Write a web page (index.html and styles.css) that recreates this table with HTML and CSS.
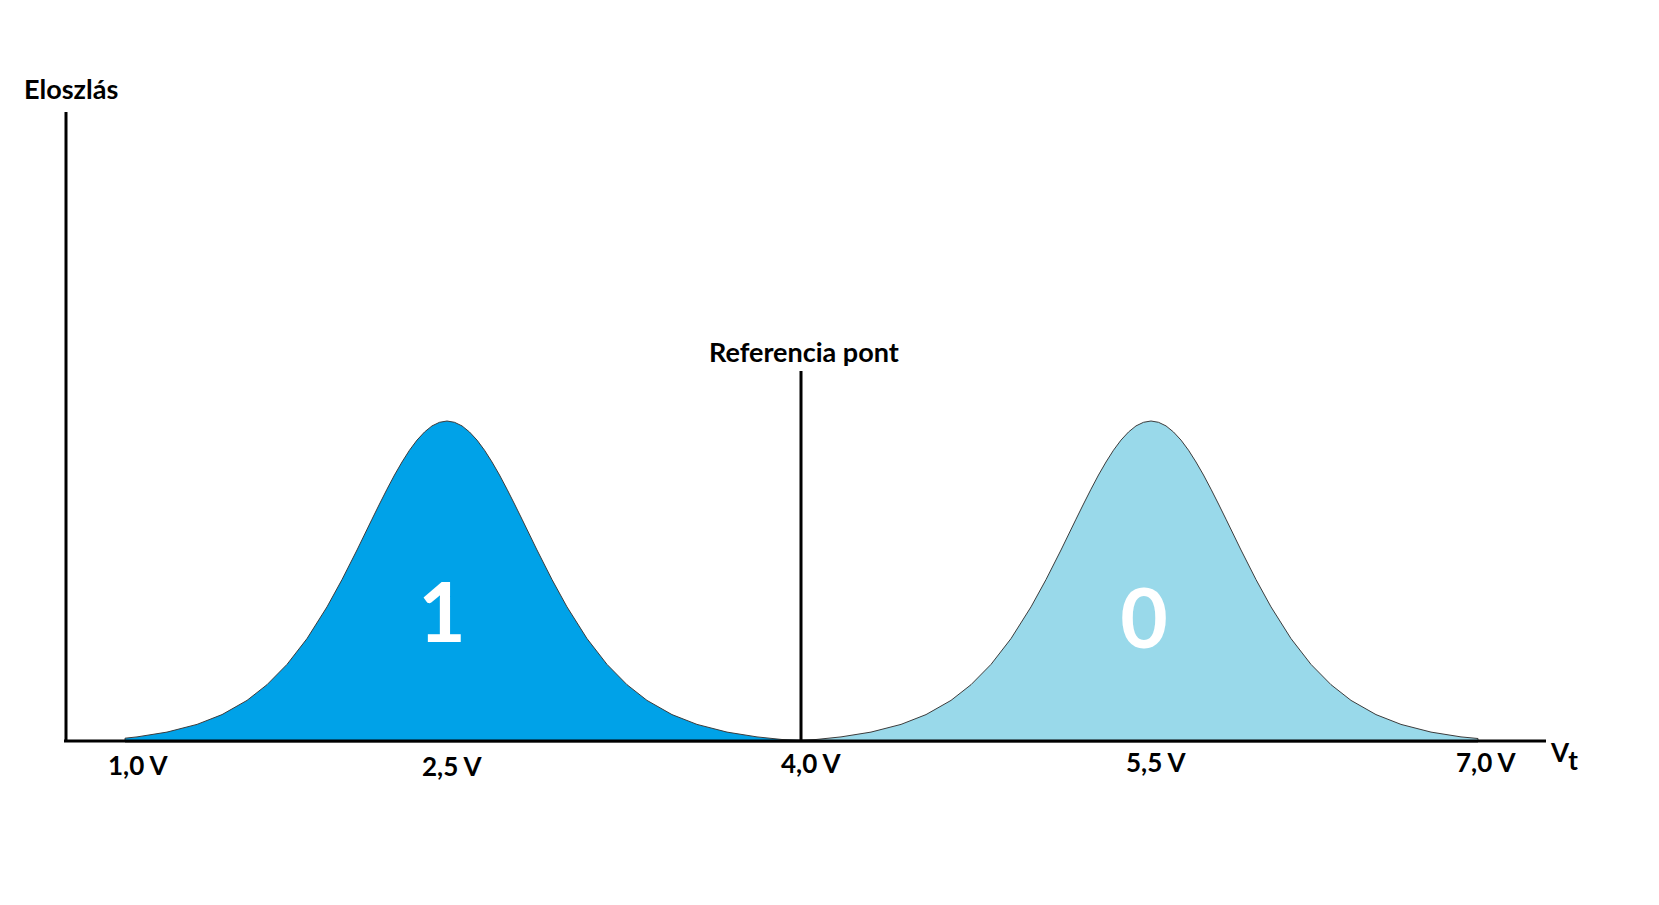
FILE: index.html
```html
<!DOCTYPE html>
<html lang="hu">
<head>
<meta charset="utf-8">
<title>Eloszlás</title>
<link rel="stylesheet" href="styles.css">
</head>
<body>
<div class="canvas">
<svg class="chart" width="1659" height="905" viewBox="0 0 1659 905" xmlns="http://www.w3.org/2000/svg">
  <path class="curve curve-one" d="M125,742 L125,738.2 L137,736.9 L167,732.1 L197,724.4 L222,714.6 L247,700.4 L267,684.7 L287,664.4 L307,638.6 L327,606.9 L342,579.6 L357,550 L372,519.2 L379.5,504 L387,489.2 L394.5,475 L402,462 L409.5,450.2 L417,440.1 L424.5,432 L432,425.9 L439.5,422.3 L447,421 L454.5,422.3 L462,425.9 L469.5,432 L477,440.1 L484.5,450.2 L492,462 L499.5,475 L507,489.2 L514.5,504 L522,519.2 L537,550 L552,579.6 L567,606.9 L587,638.6 L607,664.4 L627,684.7 L647,700.4 L672,714.6 L697,724.4 L727,732.1 L757,736.9 L782,739.5 L800,740 L800,742 Z"/>
  <path class="curve curve-zero" d="M800,742 L800,740 L816,739.5 L841,736.9 L871,732.1 L901,724.4 L926,714.6 L951,700.4 L971,684.7 L991,664.4 L1011,638.6 L1031,606.9 L1046,579.6 L1061,550 L1076,519.2 L1083.5,504 L1091,489.2 L1098.5,475 L1106,462 L1113.5,450.2 L1121,440.1 L1128.5,432 L1136,425.9 L1143.5,422.3 L1151,421 L1158.5,422.3 L1166,425.9 L1173.5,432 L1181,440.1 L1188.5,450.2 L1196,462 L1203.5,475 L1211,489.2 L1218.5,504 L1226,519.2 L1241,550 L1256,579.6 L1271,606.9 L1291,638.6 L1311,664.4 L1331,684.7 L1351,700.4 L1376,714.6 L1401,724.4 L1431,732.1 L1461,736.9 L1478,738.5 L1478,742 Z"/>
  <line class="axis" x1="66" y1="112" x2="66" y2="742"/>
  <line class="axis" x1="64" y1="741" x2="1546" y2="741"/>
  <line class="axis" x1="801" y1="371" x2="801" y2="741"/>
  <text class="label" x="24" y="99">Eloszlás</text>
  <text class="label" x="709" y="362">Referencia pont</text>
  <text class="big" x="442" y="642">1</text>
  <text class="big" x="1144" y="648">0</text>
  <text class="tick" x="108" y="775">1,0 V</text>
  <text class="tick" x="422" y="776">2,5 V</text>
  <text class="tick" x="781" y="773">4,0 V</text>
  <text class="tick" x="1126" y="772">5,5 V</text>
  <text class="tick" x="1456" y="772">7,0 V</text>
  <text class="tick" x="1551" y="762">V<tspan class="sub" dy="8">t</tspan></text>
</svg>
</div>
</body>
</html>
```

FILE: styles.css
```css
html, body {
  margin: 0;
  padding: 0;
  background: #ffffff;
}

.canvas {
  width: 1659px;
  height: 905px;
  overflow: hidden;
}

.chart {
  display: block;
}

.curve {
  stroke: #3c3c3c;
  stroke-width: 1;
  stroke-linejoin: round;
}

.curve-one {
  fill: #00a2e8;
}

.curve-zero {
  fill: #99d9ea;
}

.axis {
  stroke: #000000;
  stroke-width: 3;
}

.label,
.tick {
  font-family: Lato, "Liberation Sans", sans-serif;
  font-weight: 700;
  font-size: 27px;
  fill: #000000;
}

.tick {
  font-size: 26px;
}

.sub {
  font-size: 26px;
}

.big {
  font-family: Lato, "Liberation Sans", sans-serif;
  font-weight: 700;
  font-size: 82px;
  fill: #ffffff;
  text-anchor: middle;
}
```
